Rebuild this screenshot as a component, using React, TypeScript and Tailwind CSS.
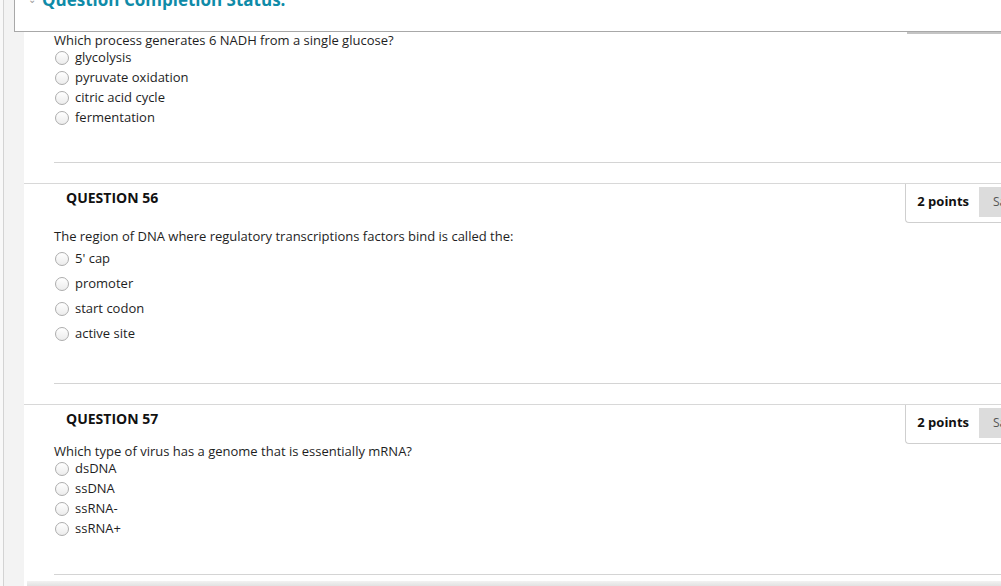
import React from "react"

function Radio() {
  return (
    <span className="inline-block w-[14px] h-[14px] rounded-full border border-[#adadad] bg-gradient-to-b from-white to-[#ececec] ml-[1px] shrink-0"></span>
  )
}

function Options({ options, rowH }: { options: string[]; rowH: string }) {
  return (
    <div className="pl-[30px]">
      {options.map((o, i) => (
        <div key={i} className={`flex items-center gap-[6px] ${rowH}`}>
          <Radio />
          <span>{o}</span>
        </div>
      ))}
    </div>
  )
}

function QuestionHeader({ num }: { num: number }) {
  return (
    <div className="flex justify-between items-start">
      <h3 className="pl-[42px] pt-[6px] text-[14px] leading-[16px] font-bold text-[#111]">QUESTION {num}</h3>
      <div className="h-[39px] flex items-center gap-[10px] pl-[11px] pb-[2px] border-l border-b border-[#cfcfcf] rounded-bl-[4px] bg-white">
        <span className="font-bold text-[13px] text-[#111]">2 points</span>
        <span className="h-[30px] flex items-center bg-[#dcdcdc] pl-[14px] w-[22px] overflow-hidden whitespace-nowrap text-[#555] text-[12px]">Save Answer</span>
      </div>
    </div>
  )
}

export default function App() {
  return (
    <div className="w-[1001px] h-[586px] overflow-hidden bg-white flex text-[13px] text-[#1e1e1e]" style={{ fontFamily: '"Open Sans", "Liberation Sans", sans-serif' }}>
      {/* left rail */}
      <div className="w-[14px] shrink-0 bg-[#f8f8f8] pl-[3px]">
        <div className="h-full border-l border-[#d3d3d3] bg-[#f3f3f3]"></div>
      </div>

      <div className="flex-1 flex flex-col min-w-0">
        {/* completion status box */}
        <div className="relative shrink-0 h-[32px] border-l border-b border-[#a8a8a8] bg-white overflow-hidden">
          <div className="flex items-center gap-[6px] -mt-[13px] pl-[13px]">
            <span className="text-[#9a9a9a] text-[10px]">⌄</span>
            <span className="text-[#0f8ba8] font-bold text-[17px]">Question Completion Status:</span>
          </div>
        </div>

        <div className="flex flex-1 shrink-0">
          <div className="w-[10px] shrink-0 bg-[#f3f3f3]"></div>
          <div className="flex-1 bg-white relative">
            <div className="absolute right-0 top-0 w-[94px] h-[2px] bg-[#c4c4c4]"></div>

            {/* question 55 (partial) */}
            <p className="pl-[30px] leading-[16px]">Which process generates 6 NADH from a single glucose?</p>
            <Options options={["glycolysis", "pyruvate oxidation", "citric acid cycle", "fermentation"]} rowH="h-[20px]" />
            <div className="ml-[30px] mt-[34px] border-t border-[#d4d4d4]"></div>

            {/* question 56 */}
            <div className="mt-[20px] border-t border-[#d8d8d8]">
              <QuestionHeader num={56} />
              <p className="pl-[30px] mt-[3px] leading-[20px]">The region of DNA where regulatory transcriptions factors bind is called the:</p>
              <Options options={["5' cap", "promoter", "start codon", "active site"]} rowH="h-[25px]" />
              <div className="ml-[30px] mt-[37px] border-t border-[#d4d4d4]"></div>
            </div>

            {/* question 57 */}
            <div className="mt-[20px] border-t border-[#d8d8d8]">
              <QuestionHeader num={57} />
              <p className="pl-[30px] -mt-[1px] leading-[16px]">Which type of virus has a genome that is essentially mRNA?</p>
              <Options options={["dsDNA", "ssDNA", "ssRNA-", "ssRNA+"]} rowH="h-[20px]" />
              <div className="ml-[30px] mt-[35px] border-t border-[#d4d4d4]"></div>
            </div>

            <div className="ml-[3px] mt-[6px] h-[6px] bg-gradient-to-b from-[#f2f2f2] to-[#dedede]"></div>
          </div>
        </div>
      </div>
    </div>
  )
}
